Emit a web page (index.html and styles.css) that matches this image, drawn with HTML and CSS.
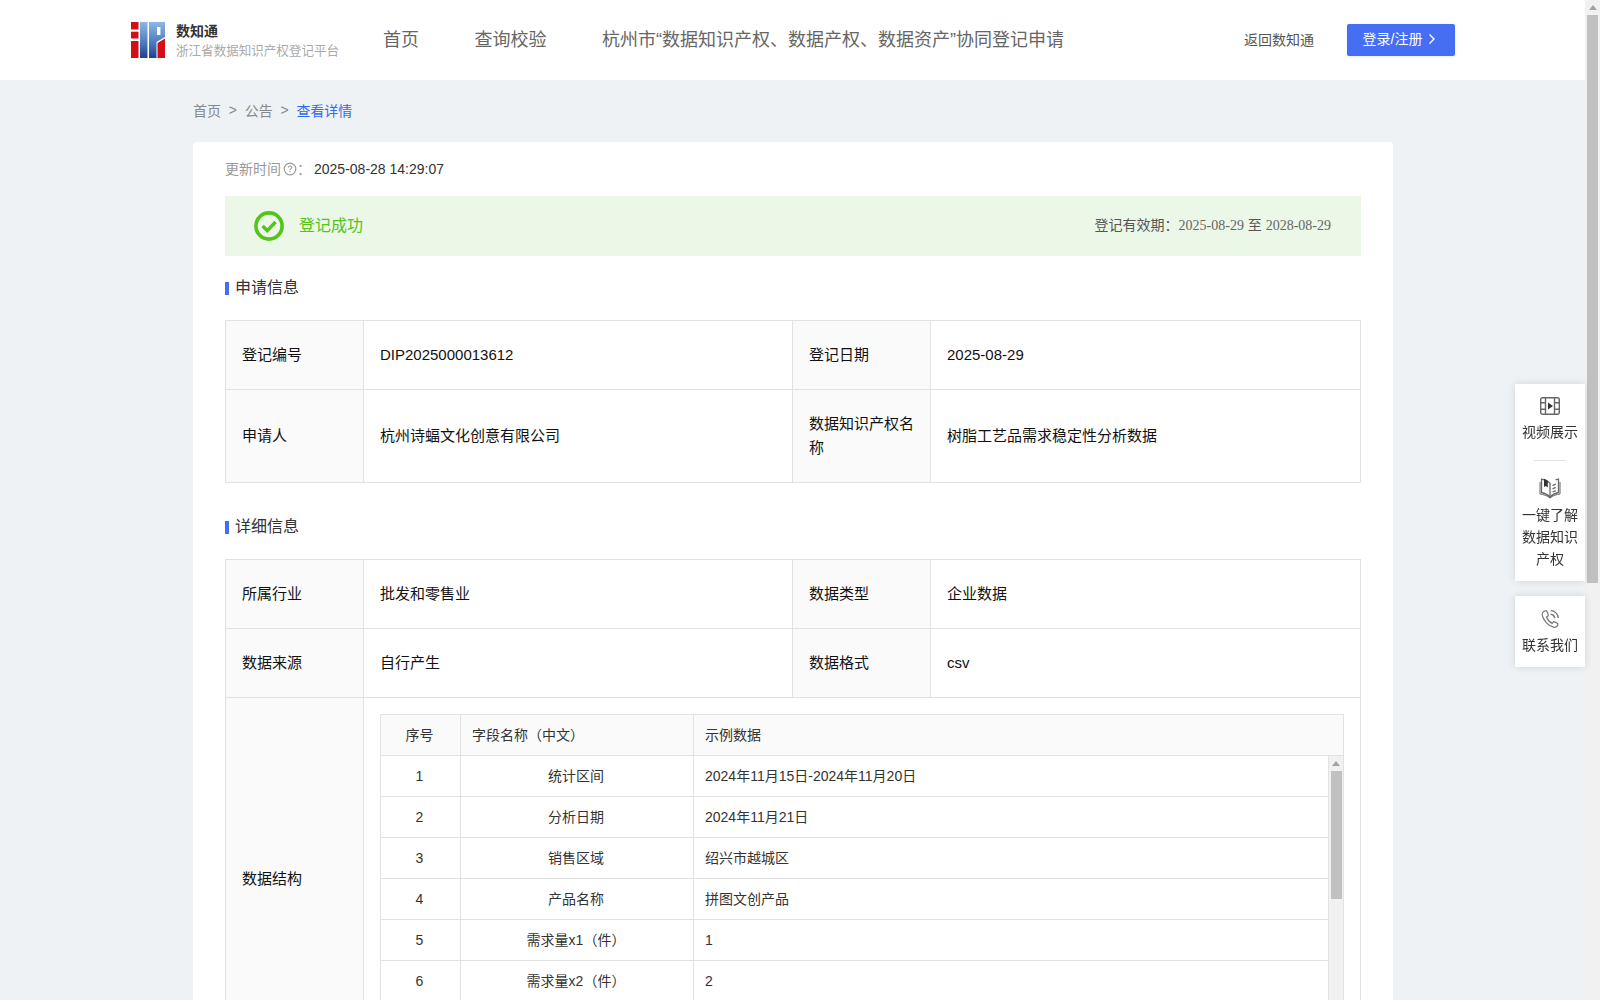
FILE: index.html
```html
<!DOCTYPE html>
<html lang="zh-CN">

<head>
  <meta charset="UTF-8">
  <title>数知通 - 查看详情</title>
  <link rel="stylesheet" href="styles.css">
</head>

<body>
  <div class="app">
    <div class="viewport">
      <header class="navbar">
        <div class="logo">
          <svg class="logo-mark" width="34" height="36" viewBox="0 0 34 36">
            <defs>
              <linearGradient id="logoBlue" x1="0" y1="0" x2="0" y2="1">
                <stop offset="0" stop-color="#8db7e6" />
                <stop offset="0.55" stop-color="#4d7fc0" />
                <stop offset="1" stop-color="#22408f" />
              </linearGradient>
            </defs>
            <rect x="0" y="0" width="7.5" height="7.5" fill="#d40f14" />
            <rect x="0" y="9.7" width="7.5" height="6.8" fill="#d40f14" />
            <rect x="0" y="19" width="7.5" height="17" fill="#d40f14" />
            <rect x="9" y="0" width="7.5" height="36" fill="url(#logoBlue)" />
            <path d="M18 0H34V15L25.5 20V36H18Z" fill="url(#logoBlue)" />
            <rect x="26" y="5" width="3.4" height="8" fill="#fff" />
            <path d="M26.5 36V21L34 16.5V36Z" fill="#d40f14" />
          </svg>
          <div class="logo-text">
            <div class="logo-name">数知通</div>
            <div class="logo-sub">浙江省数据知识产权登记平台</div>
          </div>
        </div>
        <nav class="nav-links">
          <a href="#">首页</a>
          <a href="#">查询校验</a>
          <a href="#">杭州市“数据知识产权、数据产权、数据资产”协同登记申请</a>
        </nav>
        <div class="nav-actions">
          <a class="back-link" href="#">返回数知通</a>
          <button class="login-btn">登录/注册
            <svg width="8" height="12" viewBox="0 0 8 12"><path d="M1.5 1.5L6 6L1.5 10.5" fill="none" stroke="#fff" stroke-width="1.4" /></svg>
          </button>
        </div>
      </header>

      <div class="crumbs">
        <span>首页</span><i>&gt;</i><span>公告</span><i>&gt;</i><span class="crumb-current">查看详情</span>
      </div>

      <main class="card">
        <div class="update-time">
          <span class="update-label">更新时间</span>
          <svg width="14" height="14" viewBox="0 0 14 14">
            <circle cx="7" cy="7" r="5.8" fill="none" stroke="#999" stroke-width="1.2" />
            <path d="M5.2 5.6C5.2 4.5 6 4 7 4C8 4 8.8 4.6 8.8 5.5C8.8 6.6 7 6.7 7 8.2" fill="none" stroke="#999" stroke-width="1.1" />
            <rect x="6.4" y="9.2" width="1.2" height="1.2" fill="#999" />
          </svg>
          <span class="update-label colon">：</span>
          <span class="update-value">2025-08-28 14:29:07</span>
        </div>

        <div class="status-bar">
          <div class="status-left">
            <svg width="30" height="30" viewBox="0 0 30 30">
              <circle cx="15" cy="15" r="13.1" fill="none" stroke="#52c41a" stroke-width="3.6" />
              <path d="M8.6 15L13.3 19.6L21.6 11" fill="none" stroke="#52c41a" stroke-width="3.4" />
            </svg>
            <span class="status-text">登记成功</span>
          </div>
          <div class="status-right">登记有效期：<span class="serif">2025-08-29</span> 至 <span class="serif">2028-08-29</span></div>
        </div>

        <h3 class="section-title">申请信息</h3>
        <table class="info-table">
          <colgroup>
            <col class="col-label"><col class="col-value"><col class="col-label"><col>
          </colgroup>
          <tr class="row-68">
            <th>登记编号</th>
            <td>DIP2025000013612</td>
            <th>登记日期</th>
            <td>2025-08-29</td>
          </tr>
          <tr class="row-93">
            <th>申请人</th>
            <td>杭州诗蝠文化创意有限公司</td>
            <th>数据知识产权名称</th>
            <td>树脂工艺品需求稳定性分析数据</td>
          </tr>
        </table>

        <h3 class="section-title">详细信息</h3>
        <table class="info-table">
          <colgroup>
            <col class="col-label"><col class="col-value"><col class="col-label"><col>
          </colgroup>
          <tr class="row-68">
            <th>所属行业</th>
            <td>批发和零售业</td>
            <th>数据类型</th>
            <td>企业数据</td>
          </tr>
          <tr class="row-68">
            <th>数据来源</th>
            <td>自行产生</td>
            <th>数据格式</th>
            <td>csv</td>
          </tr>
          <tr>
            <th>数据结构</th>
            <td colspan="3" class="struct-cell">
              <div class="struct">
                <div class="struct-head">
                  <div class="c-no">序号</div>
                  <div class="c-name left">字段名称（中文）</div>
                  <div class="c-data">示例数据</div>
                </div>
                <div class="struct-scroll">
                  <div class="struct-body">
                    <div class="struct-row"><div class="c-no">1</div><div class="c-name">统计区间</div><div class="c-data">2024年11月15日-2024年11月20日</div></div>
                    <div class="struct-row"><div class="c-no">2</div><div class="c-name">分析日期</div><div class="c-data">2024年11月21日</div></div>
                    <div class="struct-row"><div class="c-no">3</div><div class="c-name">销售区域</div><div class="c-data">绍兴市越城区</div></div>
                    <div class="struct-row"><div class="c-no">4</div><div class="c-name">产品名称</div><div class="c-data">拼图文创产品</div></div>
                    <div class="struct-row"><div class="c-no">5</div><div class="c-name">需求量x1（件）</div><div class="c-data">1</div></div>
                    <div class="struct-row"><div class="c-no">6</div><div class="c-name">需求量x2（件）</div><div class="c-data">2</div></div>
                  </div>
                  <div class="inner-bar">
                    <span class="arrow-up"></span>
                    <span class="inner-thumb"></span>
                  </div>
                </div>
              </div>
            </td>
          </tr>
        </table>
      </main>
    </div>

    <div class="page-bar">
      <span class="arrow-up"></span>
      <span class="page-thumb"></span>
    </div>
  </div>

  <aside class="side-tools">
    <div class="side-box">
      <div class="side-item">
        <svg width="22" height="20" viewBox="0 0 22 20" fill="none" stroke="#666" stroke-width="1.4">
          <rect x="1.7" y="1.7" width="18.6" height="16.6" rx="2" />
          <path d="M6.5 1.7V18.3M15.5 1.7V18.3M1.7 6.8H6.5M1.7 13.2H6.5M15.5 6.8H20.3M15.5 13.2H20.3" />
          <path d="M9 6.4L14 10L9 13.6Z" fill="#333" stroke="none" />
        </svg>
        <p>视频展示</p>
      </div>
      <div class="side-line"></div>
      <div class="side-item">
        <svg width="22" height="22" viewBox="0 0 22 22" fill="none" stroke="#666" stroke-width="1.3">
          <path d="M11 6C8.5 3.8 5.5 2.6 2.5 2.2V15.5C5.5 16 8.5 17.4 11 20.2C13.5 17.4 16.5 16 19.5 15.5V2.2C18.6 2.3 17.6 2.6 16.6 3" />
          <path d="M1 5V17C4.5 17.4 8 18.6 11 21C14 18.6 17.5 17.4 21 17V5" stroke-width="1" />
          <path d="M11 6V20M13.5 8.6L16.8 7.2M13.5 11.8L16.8 10.4M13.5 15L16.8 13.6" />
          <path d="M5 1.8L8.8 3.8V10.5L6.9 9L5 10Z" fill="#333" stroke="none" />
        </svg>
        <p>一键了解<br>数据知识<br>产权</p>
      </div>
    </div>
    <div class="side-box">
      <div class="side-item">
        <svg width="20" height="20" viewBox="0 0 20 20" fill="none" stroke="#777" stroke-width="1.2">
          <path d="M5.4 1.8C3.6 2.4 1.8 4 2.2 6.2C3 10.8 8.4 17.2 13.6 18.2C15.8 18.6 17.4 17.2 17.8 15.6C17.9 15 17.7 14.6 17.2 14.3L14.6 12.9C14 12.6 13.5 12.7 13.1 13.2L12.1 14.4C9.6 13.2 7.4 10.4 6.6 8L7.9 7C8.4 6.6 8.5 6.1 8.2 5.5L6.9 2.5C6.6 1.9 6 1.6 5.4 1.8Z" />
          <path d="M10.6 5.2C12.8 5.4 14.4 7 14.6 9.2M10.8 1.6C14.8 1.9 17.9 5 18.3 9" stroke-width="1.5" />
        </svg>
        <p>联系我们</p>
      </div>
    </div>
  </aside>
</body>

</html>
```

FILE: styles.css
```css
* {
  margin: 0;
  padding: 0;
  box-sizing: border-box;
}

html,
body {
  height: 100%;
  overflow: hidden;
}

body {
  background: #eef2f5;
  color: #333;
  font-family: "Liberation Sans", "Noto Sans CJK SC", sans-serif;
  font-size: 14px;
}

a {
  color: inherit;
  text-decoration: none;
}

.app {
  display: flex;
  height: 100vh;
}

.viewport {
  flex: 1;
  min-width: 0;
  overflow: hidden;
}

.page-bar {
  width: 15px;
  background: #f1f1f1;
  padding: 0 2px;
  display: flex;
  flex-direction: column;
  align-items: center;
}

.arrow-up {
  display: block;
  flex: none;
  width: 0;
  height: 0;
  margin: 5px 0 5px;
  border-left: 4px solid transparent;
  border-right: 4px solid transparent;
  border-bottom: 5px solid #a3a3a3;
}

.page-thumb {
  width: 11px;
  height: 568px;
  background: #c1c1c1;
}

.navbar {
  height: 80px;
  background: #fff;
  display: flex;
  align-items: center;
  padding: 0 130px 0 131px;
}

.logo {
  display: flex;
  align-items: center;
  gap: 11px;
  width: 252px;
}

.logo-mark {
  flex: none;
}

.logo-text {
  padding-top: 2px;
}

.logo-name {
  font-size: 14px;
  font-weight: 700;
  line-height: 20px;
  color: #333;
}

.logo-sub {
  font-size: 12.55px;
  line-height: 20px;
  color: #aaa;
}

.nav-links {
  flex: 1;
  display: flex;
  gap: 55.5px;
  font-size: 18px;
  color: #666;
  padding-bottom: 4px;
}

.nav-actions {
  display: flex;
  align-items: center;
  gap: 33px;
}

.back-link {
  color: #555;
  padding-bottom: 2px;
}

.login-btn {
  width: 108px;
  height: 32px;
  padding: 0 3px 5px 0;
  background: #456ef3;
  color: #fff;
  border: none;
  border-radius: 2px;
  box-shadow: 0 1px 3px rgba(69, 110, 243, 0.15);
  font: inherit;
  display: flex;
  align-items: center;
  justify-content: center;
  gap: 6px;
}

.login-btn svg {
  margin-top: 3px;
}

.crumbs {
  width: 1200px;
  margin-left: 193px;
  height: 62px;
  padding-bottom: 3px;
  display: flex;
  align-items: center;
  color: #888;
}

.crumbs i {
  font-style: normal;
  margin: 0 7.75px;
}

.crumb-current {
  color: #2f6bf0;
}

.card {
  width: 1200px;
  margin-left: 193px;
  background: #fff;
  border-radius: 4px;
  padding: 16px 32px 32px;
}

.update-time {
  display: flex;
  align-items: center;
  height: 22px;
  color: #333;
}

.update-label {
  color: #999;
  margin-right: 2px;
  padding-bottom: 2px;
}

.colon {
  margin: 0;
  width: 18px;
}

.update-value {
  margin-left: -1px;
}

.status-bar {
  height: 60px;
  margin-top: 16px;
  background: #ebf7e7;
  display: flex;
  align-items: center;
  justify-content: space-between;
  padding: 0 30px 0 29px;
}

.status-left {
  display: flex;
  align-items: center;
  gap: 15px;
}

.status-text {
  font-size: 16px;
  color: #52c41a;
  padding-bottom: 4px;
}

.status-right {
  color: #555;
  padding-bottom: 4px;
}

.serif {
  font-family: "Liberation Serif", serif;
  font-size: 14px;
  color: #666;
}

.section-title {
  display: flex;
  align-items: center;
  height: 24px;
  margin: 18px 0 22px;
  font-size: 16px;
  font-weight: 400;
  color: #333;
}

.section-title::before {
  content: '';
  width: 4px;
  height: 13px;
  margin: 4px 6px 0 0;
  background: #456ef3;
}

.info-table + .section-title {
  margin-top: 30px;
}

.info-table {
  width: 100%;
  table-layout: fixed;
  border-collapse: collapse;
  color: #111;
  font-size: 15px;
}

.info-table th,
.info-table td {
  border: 1px solid #e2e2e2;
  padding: 0 15px 1px 16px;
  text-align: left;
  font-weight: 400;
  line-height: 24px;
}

.info-table th {
  background: #fafafa;
}

.col-label {
  width: 138px;
}

.col-value {
  width: 429px;
}

.row-68 {
  height: 69px;
}

.row-93 {
  height: 93px;
}

.info-table .struct-cell {
  padding: 16px;
}

.struct {
  border: 1px solid #e2e2e2;
  color: #333;
  font-size: 14px;
}

.struct-head,
.struct-row {
  display: flex;
  height: 41px;
  line-height: 40px;
  border-bottom: 1px solid #e2e2e2;
}

.struct-head {
  background: #fafafa;
}

.c-no {
  flex: none;
  width: 80px;
  padding-right: 2px;
  text-align: center;
  border-right: 1px solid #e2e2e2;
}

.c-name {
  flex: none;
  width: 233px;
  padding: 0 13px 0 11px;
  text-align: center;
  border-right: 1px solid #e2e2e2;
}

.c-name.left {
  text-align: left;
}

.c-data {
  flex: 1;
  padding: 0 11px;
}

.struct-scroll {
  display: flex;
  height: 287px;
}

.struct-body {
  flex: 1;
  min-width: 0;
  border-right: 1px solid #e2e2e2;
}

.inner-bar {
  width: 14px;
  background: #f1f1f1;
  display: flex;
  flex-direction: column;
  align-items: center;
}

.inner-thumb {
  width: 11px;
  height: 128px;
  background: #c1c1c1;
}

.side-tools {
  position: fixed;
  top: 384px;
  right: 15px;
  width: 70px;
  display: flex;
  flex-direction: column;
  gap: 15px;
}

.side-box {
  background: #fff;
  box-shadow: 0 0 8px rgba(0, 0, 0, 0.12);
  padding: 12px 0 11px;
  text-align: center;
  color: #333;
}

.side-box + .side-box {
  padding-top: 13px;
}

.side-item svg {
  display: block;
  margin: 0 auto 5px;
}

.side-item p {
  line-height: 22px;
}

.side-line {
  width: 32px;
  height: 1px;
  margin: 17px auto 16px;
  background: #e2e2e2;
}
```
